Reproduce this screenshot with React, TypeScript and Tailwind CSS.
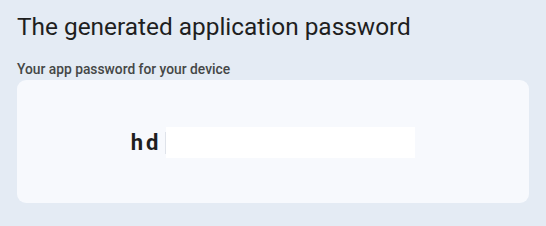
export default function App() {
  return (
    <div className="w-[546px] h-[226px] bg-[#e4ebf4] px-[17px] pt-[12px]" style={{ fontFamily: 'Roboto, "Open Sans", sans-serif' }}>
      <h1 className="text-[24.4px] leading-[30px] text-[#1f1f1f] font-normal">The generated application password</h1>
      <div className="mt-[19px] text-[13.8px] leading-[16px] font-medium text-[#444746]">Your app password for your device</div>
      <div className="mt-[3px] h-[123px] rounded-[9px] bg-[#f7f9fd] flex items-center justify-center pt-[2px]">
        <div className="flex items-center">
          <span className="text-[22px] font-bold text-[#1f1f1f] tracking-[3px] leading-[24px]">hd</span>
          <div className="ml-[4px] w-[1px] h-[22px] bg-[#dfe3ea]" />
          <div className="w-[249px] h-[31px] bg-white" />
        </div>
      </div>
    </div>
  );
}
